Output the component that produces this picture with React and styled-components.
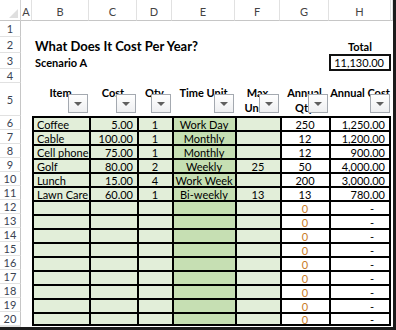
import React from 'react';
import styled, { createGlobalStyle } from 'styled-components';

const GlobalStyle = createGlobalStyle`
    body {
        margin: 0;
        background: #fff;
        font-family: Lato, 'Liberation Sans', sans-serif;
    }
`;

const COLS = ['A', 'B', 'C', 'D', 'E', 'F', 'G', 'H'];

const Frame = styled.div`
    width: 396px;
    height: 330px;
    box-sizing: border-box;
    border-right: 3px solid #1c1c1c;
    border-bottom: 3px solid #1c1c1c;
    overflow: hidden;
    background: #fff;
`;

const Sheet = styled.div`
    display: grid;
    grid-template-columns: 21px 11px 57px 48px 35px 63px 45px 49px 62px 1fr;
    grid-template-rows: 21px 16px 16px 16px 14px 33px repeat(15, 14px) 1fr;
    height: 100%;
    font-size: 11px;
    color: #000;
`;

const Corner = styled.div`
    position: relative;
    border-right: 1px solid #d4d4d4;
    border-bottom: 1px solid #c6c6c6;
    &::after {
        content: '';
        position: absolute;
        right: 2px;
        bottom: 2px;
        border-style: solid;
        border-width: 0 0 9px 9px;
        border-color: transparent transparent #dfdfdf transparent;
    }
`;

const ColHead = styled.div`
    display: flex;
    align-items: center;
    justify-content: center;
    border-right: 1px solid #e1e1e1;
    border-bottom: 1px solid #c6c6c6;
    color: #444;
    font-size: 11px;
    padding-top: 2px;
`;

const RowHead = styled.div`
    display: flex;
    align-items: center;
    justify-content: center;
    border-right: 1px solid #c6c6c6;
    border-bottom: 1px solid #e1e1e1;
    color: #3a4352;
    font-size: 11px;
    box-sizing: border-box;
`;

const Blank = styled.div``;

const Title = styled.div`
    grid-column: 3 / span 6;
    display: flex;
    align-items: flex-end;
    padding-left: 3px;
    font-size: 13px;
    font-weight: 700;
    line-height: 15px;
    white-space: nowrap;
    margin-bottom: -1px;
`;

const Subtitle = styled(Title)`
    font-size: 11px;
    line-height: 13px;
    margin-bottom: 0;
`;

const TotalLabel = styled.div`
    display: flex;
    align-items: flex-end;
    justify-content: center;
    font-weight: 700;
    line-height: 13px;
`;

const TotalBox = styled.div`
    display: flex;
    align-items: center;
    justify-content: flex-end;
    padding-right: 5px;
    border: 2px solid #111;
    margin-top: 1px;
    height: 17px;
    box-sizing: border-box;
`;

const HeadCell = styled.div`
    position: relative;
    text-align: center;
    font-weight: 700;
    line-height: 15px;
    padding-top: 2px;
`;

const FilterButton = styled.div`
    position: absolute;
    right: 1px;
    bottom: 3px;
    width: 20px;
    height: 19px;
    box-sizing: border-box;
    border: 1px solid #a4a9b0;
    background: linear-gradient(#ffffff, #eeeff1);
    display: flex;
    align-items: center;
    justify-content: center;
    &::after {
        content: '';
        border-style: solid;
        border-width: 4px 4px 0 4px;
        border-color: #5f5f5f transparent transparent transparent;
    }
`;

const FILLS = {
    light: '#e2eed9',
    mid: '#c6dfb3',
    none: '#fff',
};

const DataCell = styled.div`
    display: flex;
    align-items: center;
    justify-content: ${p => (p.$align === 'right' ? 'flex-end' : p.$align === 'center' ? 'center' : 'flex-start')};
    box-sizing: border-box;
    padding: 1px ${p => p.$padRight || 4}px 0 3px;
    background: ${p => FILLS[p.$fill]};
    border-left: 2px solid #000;
    border-top: 2px solid #000;
    border-right: ${p => (p.$last ? '2px solid #000' : 'none')};
    border-bottom: ${p => (p.$bottom ? '2px solid #000' : 'none')};
    color: ${p => p.$color || '#000'};
    white-space: nowrap;
    overflow: hidden;
`;

const rows = [
    ['Coffee', '5.00', '1', 'Work Day', '', '250', '1,250.00'],
    ['Cable', '100.00', '1', 'Monthly', '', '12', '1,200.00'],
    ['Cell phone', '75.00', '1', 'Monthly', '', '12', '900.00'],
    ['Golf', '80.00', '2', 'Weekly', '25', '50', '4,000.00'],
    ['Lunch', '15.00', '4', 'Work Week', '', '200', '3,000.00'],
    ['Lawn Care', '60.00', '1', 'Bi-weekly', '13', '13', '780.00'],
];
for (let i = 0; i < 9; i++) rows.push(['', '', '', '', '', '0', '-']);

const columnSpec = [
    { fill: 'light', align: 'left' },
    { fill: 'light', align: 'right' },
    { fill: 'light', align: 'center' },
    { fill: 'mid', align: 'center' },
    { fill: 'light', align: 'center' },
    { fill: 'none', align: 'center' },
    { fill: 'none', align: 'right' },
];

const headers = ['Item', 'Cost', 'Qty', 'Time Unit', 'Max Units', 'Annual Qty', 'Annual Cost'];

export default function App() {
    return (
        <>
            <GlobalStyle />
            <Frame>
                <Sheet>
                    <Corner />
                    {COLS.map(c => (
                        <ColHead key={c}>{c}</ColHead>
                    ))}
                    <ColHead />

                    {/* row 1 */}
                    <RowHead>1</RowHead>
                    <Blank style={{ gridColumn: '2 / -1' }} />

                    {/* row 2 */}
                    <RowHead>2</RowHead>
                    <Blank />
                    <Title>What Does It Cost Per Year?</Title>
                    <TotalLabel>Total</TotalLabel>
                    <Blank />

                    {/* row 3 */}
                    <RowHead>3</RowHead>
                    <Blank />
                    <Subtitle>Scenario A</Subtitle>
                    <TotalBox>11,130.00</TotalBox>
                    <Blank />

                    {/* row 4 */}
                    <RowHead>4</RowHead>
                    <Blank style={{ gridColumn: '2 / -1' }} />

                    {/* row 5 */}
                    <RowHead>5</RowHead>
                    <Blank />
                    {headers.map(h => (
                        <HeadCell key={h}>
                            {h}
                            <FilterButton />
                        </HeadCell>
                    ))}
                    <Blank />

                    {rows.map((r, i) => (
                        <React.Fragment key={i}>
                            <RowHead>{i + 6}</RowHead>
                            <Blank />
                            {r.map((v, j) => (
                                <DataCell
                                    key={j}
                                    $fill={columnSpec[j].fill}
                                    $align={columnSpec[j].align}
                                    $last={j === 6}
                                    $bottom={i === rows.length - 1}
                                    $padRight={v === '-' ? 15 : 4}
                                    $color={v === '0' ? '#c97a26' : undefined}
                                >
                                    {v}
                                </DataCell>
                            ))}
                            <Blank />
                        </React.Fragment>
                    ))}
                    <RowHead />
                </Sheet>
            </Frame>
        </>
    );
}
